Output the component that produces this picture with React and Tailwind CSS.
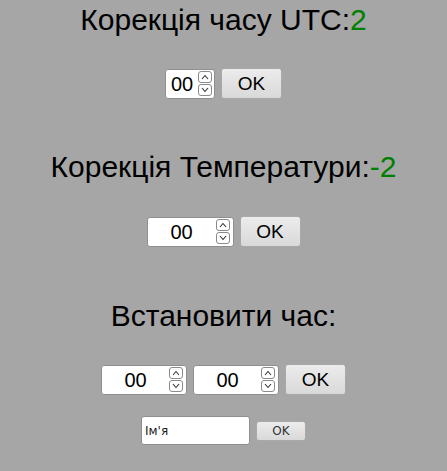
import React from "react";

function Spinner() {
  return (
    <div className="flex flex-col gap-[1px] shrink-0">
      <div className="w-[14px] h-[12px] border border-[#8a8a8a] rounded-[3px] bg-white flex items-center justify-center">
        <svg width="8" height="6" viewBox="0 0 8 6">
          <path d="M1 5 L4 1.5 L7 5" fill="none" stroke="#333" strokeWidth="1.1" />
        </svg>
      </div>
      <div className="w-[14px] h-[12px] border border-[#8a8a8a] rounded-[3px] bg-white flex items-center justify-center">
        <svg width="8" height="6" viewBox="0 0 8 6">
          <path d="M1 1 L4 4.5 L7 1" fill="none" stroke="#333" strokeWidth="1.1" />
        </svg>
      </div>
    </div>
  );
}

function NumBox({ width }) {
  return (
    <div
      className={`${width} h-[30px] bg-white border border-[#8f8f8f] rounded-[3px] flex items-center pr-[3px]`}
    >
      <span className="flex-1 text-center text-[20px] text-black leading-none">00</span>
      <Spinner />
    </div>
  );
}

function OkButton() {
  return (
    <button className="w-[61px] h-[31px] rounded-[3px] border border-[#a9a9a9] bg-gradient-to-b from-[#ececec] to-[#d9d9d9] text-[19px] text-black leading-none">
      OK
    </button>
  );
}

export default function App() {
  return (
    <div
      className="w-[447px] h-[471px] bg-[#a6a6a6] flex flex-col items-center"
      style={{ fontFamily: '"Liberation Sans", Arial, sans-serif' }}
    >
      <h2 className="mt-[3px] text-[30px] leading-[34px] text-black">
        Корекція часу UTC:<span className="text-[#008000]">2</span>
      </h2>

      <div className="mt-[31px] flex items-center gap-[6px]">
        <div className="w-[50px] h-[30px] bg-white border border-[#8f8f8f] rounded-[3px] flex items-center pl-[5px] pr-[2px]">
          <span className="flex-1 text-[20px] text-black leading-none">00</span>
          <Spinner />
        </div>
        <OkButton />
      </div>

      <h2 className="mt-[51px] text-[30px] leading-[34px] text-black">
        Корекція Температури:<span className="text-[#008000]">-2</span>
      </h2>

      <div className="mt-[32px] flex items-center gap-[6px]">
        <NumBox width="w-[87px]" />
        <OkButton />
      </div>

      <h2 className="mt-[52px] text-[30px] leading-[34px] text-black">
        Встановити час:
      </h2>

      <div className="mt-[31px] flex items-center gap-[6px]">
        <NumBox width="w-[86px]" />
        <NumBox width="w-[86px]" />
        <OkButton />
      </div>

      <div className="mt-[21px] flex items-center gap-[6px]">
        <div className="w-[109px] h-[29px] bg-white border border-[#8f8f8f] rounded-[3px] flex items-center px-[3px]">
          <span
            className="text-[12px] text-[#1a1a1a]"
            style={{ fontFamily: '"DejaVu Sans", sans-serif' }}
          >
            Ім'я
          </span>
        </div>
        <button
          className="w-[50px] h-[20px] rounded-[3px] border border-[#a9a9a9] bg-gradient-to-b from-[#ececec] to-[#d9d9d9] text-[12px] text-[#333] leading-none"
          style={{ fontFamily: '"DejaVu Sans", sans-serif' }}
        >
          OK
        </button>
      </div>
    </div>
  );
}
